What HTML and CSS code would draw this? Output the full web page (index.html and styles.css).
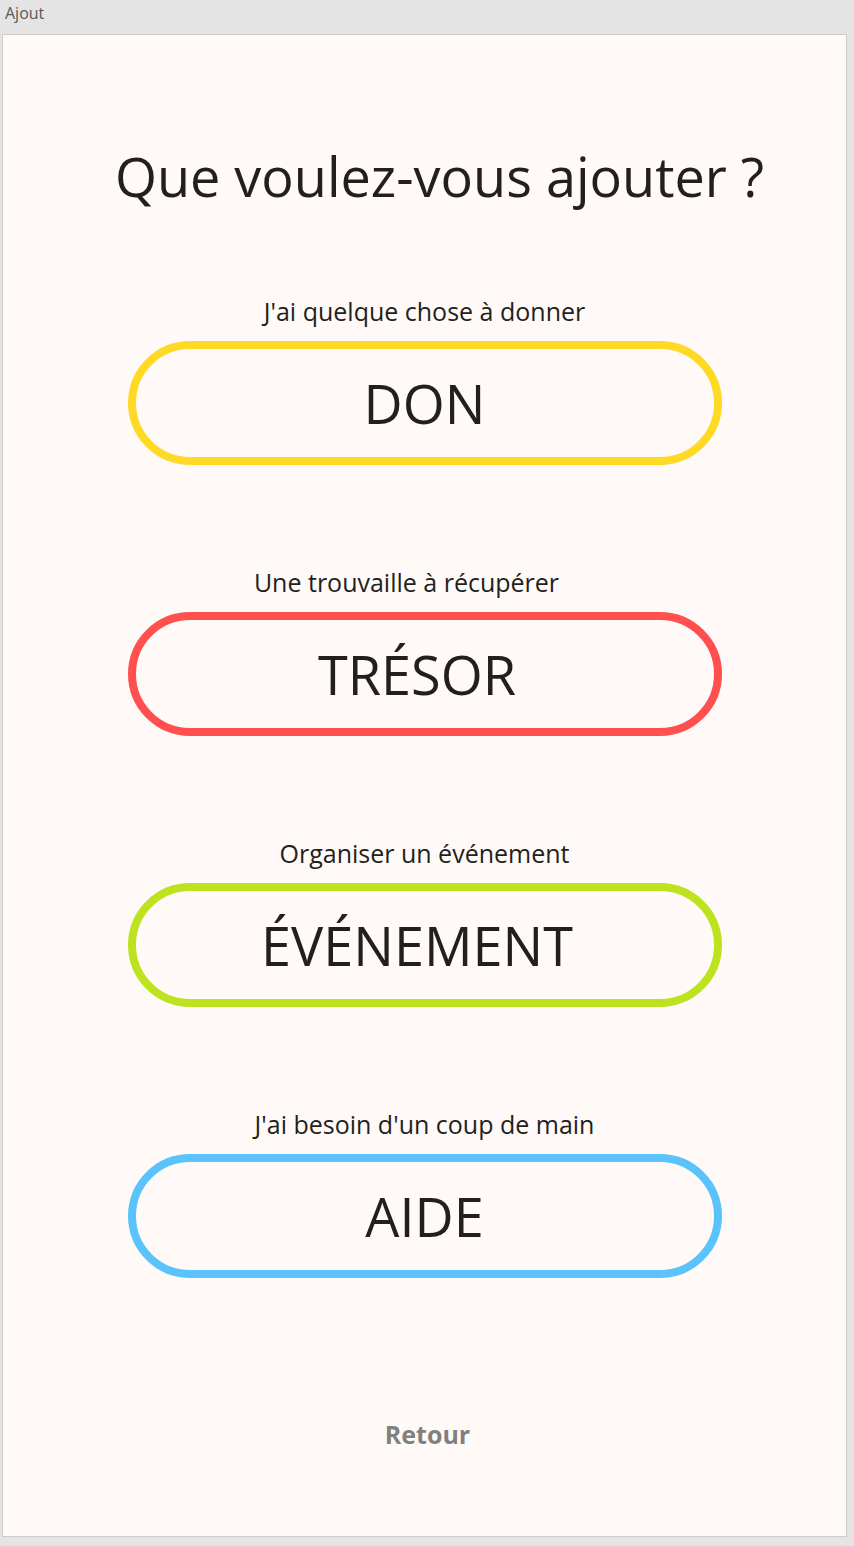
FILE: index.html
```html
<!DOCTYPE html>
<html lang="fr">
<head>
<meta charset="utf-8">
<title>Ajout</title>
<link rel="stylesheet" href="styles.css">
</head>
<body>
<div class="titlebar">Ajout</div>
<main class="panel">
  <h1 class="title">Que voulez-vous ajouter ?</h1>
  <section class="choice">
    <p class="hint">J'ai quelque chose à donner</p>
    <button class="pill pill-don">DON</button>
  </section>
  <section class="choice">
    <p class="hint hint-left">Une trouvaille à récupérer</p>
    <button class="pill pill-tresor text-left">TRÉSOR</button>
  </section>
  <section class="choice">
    <p class="hint">Organiser un événement</p>
    <button class="pill pill-event text-left">ÉVÉNEMENT</button>
  </section>
  <section class="choice">
    <p class="hint">J'ai besoin d'un coup de main</p>
    <button class="pill pill-aide">AIDE</button>
  </section>
  <a class="back">Retour</a>
</main>
</body>
</html>
```
FILE: styles.css
```css
* { box-sizing: border-box; }
html, body { margin: 0; padding: 0; }
body {
  background: #e4e4e4;
  font-family: "Open Sans", "Noto Sans", sans-serif;
  color: #221f1d;
  width: 854px;
  height: 1546px;
  overflow: hidden;
}
.titlebar {
  height: 34px;
  padding: 3px 0 0 5px;
  font-size: 16px;
  line-height: 20px;
  color: #5a5a5a;
}
.panel {
  margin: 0 7px 0 2px;
  height: 1503px;
  background: #fffaf7;
  border: 1px solid #cdcdcd;
  display: flex;
  flex-direction: column;
  align-items: center;
}
.title {
  margin: 106px 0 0 30px;
  font-weight: 400;
  font-size: 54px;
  line-height: 70px;
}
.choice {
  display: flex;
  flex-direction: column;
  align-items: center;
  width: 100%;
}
.choice:first-of-type { margin-top: 84px; }
.choice + .choice { margin-top: 101px; }
.hint {
  margin: 0 0 14px;
  font-size: 25px;
  line-height: 32px;
}
.hint-left { margin-right: 36px; }
.pill {
  width: 594px;
  height: 124px;
  border-radius: 62px;
  border: 8px solid;
  background: transparent;
  font-family: inherit;
  color: #221f1d;
  font-size: 54px;
  padding: 0;
}
.text-left { padding-right: 15px; }
.pill-don { border-color: #fed926; }
.pill-tresor { border-color: #ff4f4f; }
.pill-event { border-color: #bde21e; }
.pill-aide { border-color: #5ac3fb; }
.back {
  margin: 139px 0 0 6px;
  font-size: 25px;
  font-weight: 700;
  color: #808080;
}
```
